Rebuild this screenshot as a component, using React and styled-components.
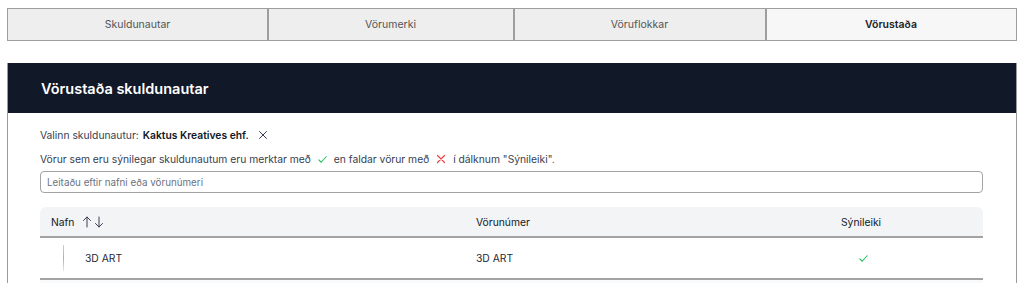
import styled, { createGlobalStyle } from "styled-components";

/* ===== GLOBAL ===== */

const Global = createGlobalStyle`
body{
margin:0;
background:#fff;
font-family:Inter, "Noto Sans", sans-serif;
color:#111827;
}
`;

/* ===== PAGE ===== */

const Page = styled.div`
padding:8px 7px 0 7px;
`;

/* ===== TABS ===== */

const Tabs = styled.div`
display:grid;
grid-template-columns:261px 246px 252px 1fr;
margin-bottom:22px;
`;

const Tab = styled.div`
height:31px;
display:flex;
align-items:center;
justify-content:center;
border:1px solid #9e9e9e;
border-left-width:${p => (p.first ? "1px" : "0")};
background:${p => (p.active ? "#f7f7f7" : "#eeeeee")};
color:${p => (p.active ? "#222" : "#555")};
font-weight:${p => (p.active ? 600 : 400)};
font-size:10.5px;
& + &{
box-shadow:inset 1px 0 0 #9e9e9e;
}
`;

/* ===== PANEL ===== */

const Panel = styled.section`
border:1px solid #9a9a9a;
border-top:none;
`;

const PanelHead = styled.div`
height:50px;
background:#111827;
color:#fff;
display:flex;
align-items:center;
padding:0 33px;
font-size:14.5px;
font-weight:600;
`;

const Body = styled.div`
padding:10px 33px 0 32px;
font-size:10.3px;
color:#374151;
`;

const Line = styled.div`
display:flex;
align-items:center;
height:24px;
gap:4px;
`;

const Strong = styled.b`
font-weight:600;
color:#111827;
`;

const Mark = styled.span`
display:inline-flex;
margin:0 ${p => p.space || "2px"};
`;

const Search = styled.input`
display:block;
box-sizing:border-box;
width:100%;
height:22px;
margin-top:0;
border:1px solid #a3a3a3;
border-radius:4px;
padding:0 6px;
font-family:inherit;
font-size:9.8px;
color:#374151;
outline:none;
&::placeholder{
color:#6b7280;
}
`;

/* ===== TABLE ===== */

const Table = styled.div`
margin-top:14px;
`;

const Row = styled.div`
display:grid;
grid-template-columns:436px 365px 1fr;
align-items:center;
height:${p => (p.head ? "29px" : "40px")};
background:${p => (p.head ? "#f3f4f6" : "#fff")};
border-radius:${p => (p.head ? "6px 6px 0 0" : "0")};
border-bottom:2px solid #a3a3a3;
font-size:10.3px;
color:${p => (p.head ? "#111827" : "#1f2937")};
`;

const Cell = styled.div`
display:flex;
align-items:center;
padding-left:${p => p.pad || "0"};
gap:${p => p.gap || "0"};
`;

const Thumb = styled.div`
width:1px;
height:26px;
background:linear-gradient(#e7c9a8,#d9a37e,#f2e3d4);
margin-right:21px;
`;

const Next = styled.div`
height:6px;
background:#f9fafb;
`;

const Check = ({ size = 12 }) => (
    <svg width={size} height={size} viewBox="0 0 24 24" fill="none" stroke="#22c55e" strokeWidth="2.4" strokeLinecap="round" strokeLinejoin="round">
        <path d="M4 13l5 5L20 6" />
    </svg>
);

const Cross = ({ size = 12, color = "#ef4444", weight = 2 }) => (
    <svg width={size} height={size} viewBox="0 0 24 24" fill="none" stroke={color} strokeWidth={weight} strokeLinecap="round">
        <path d="M5 5l14 14M19 5L5 19" />
    </svg>
);

const Arrows = () => (
    <svg width="24" height="12" viewBox="0 0 24 12" fill="none" stroke="#374151" strokeWidth="1" strokeLinecap="round" strokeLinejoin="round">
        <path d="M5 11V1M1.5 4.5L5 1l3.5 3.5" />
        <path d="M17 1v10M13.5 7.5L17 11l3.5-3.5" />
    </svg>
);

/* ===== COMPONENT ===== */

export default function App() {

    return (
        <Page>
            <Global />

            <Tabs>
                <Tab first>Skuldunautar</Tab>
                <Tab>Vörumerki</Tab>
                <Tab>Vöruflokkar</Tab>
                <Tab active>Vörustaða</Tab>
            </Tabs>

            <Panel>
                <PanelHead>Vörustaða skuldunautar</PanelHead>

                <Body>
                    <Line>
                        Valinn skuldunautur: <Strong>Kaktus Kreatives ehf.</Strong>
                        <Mark space="4px"><Cross size={12} color="#374151" /></Mark>
                    </Line>

                    <Line>
                        Vörur sem eru sýnilegar skuldunautum eru merktar með
                        <Mark><Check size={11} /></Mark>
                        en faldar vörur með
                        <Mark><Cross size={12} color="#ef4444" weight={2.4} /></Mark>
                        í dálknum "Sýnileiki".
                    </Line>

                    <Search placeholder="Leitaðu eftir nafni eða vörunúmeri" />

                    <Table>
                        <Row head>
                            <Cell pad="11px" gap="8px">Nafn <Arrows /></Cell>
                            <Cell>Vörunúmer</Cell>
                            <Cell>Sýnileiki</Cell>
                        </Row>
                        <Row>
                            <Cell pad="23px"><Thumb />3D ART</Cell>
                            <Cell>3D ART</Cell>
                            <Cell pad="17px"><Check size={11} /></Cell>
                        </Row>
                        <Next />
                    </Table>
                </Body>
            </Panel>
        </Page>
    )
}
